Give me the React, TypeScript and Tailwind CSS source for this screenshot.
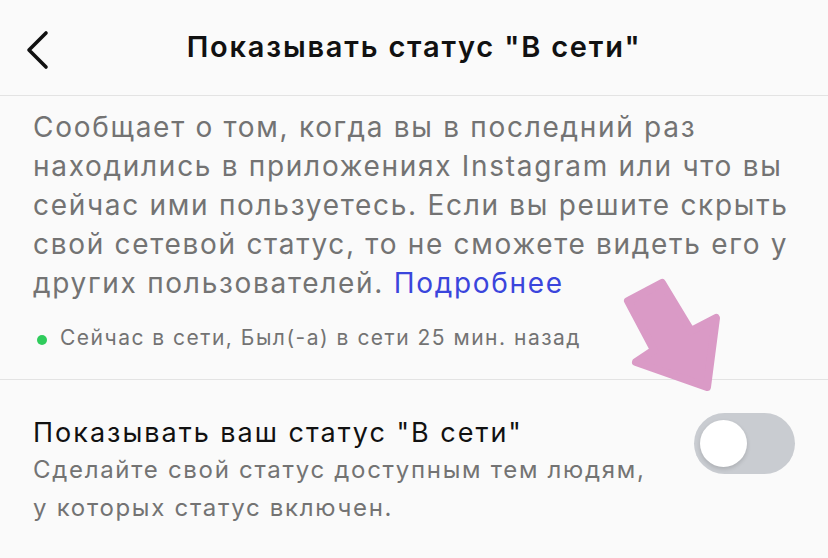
import React from 'react';

const BackIcon = () => (
  <svg width="28" height="40" viewBox="0 0 28 40" fill="none" aria-hidden>
    <path d="M21 3 L4 20 L21 37" stroke="#111" strokeWidth="3.6" strokeLinecap="round" strokeLinejoin="round" />
  </svg>
);

const Toggle = () => (
  <div className="relative w-[101px] h-[61px] rounded-full bg-[#c9ccd1] shrink-0">
    <div className="absolute left-[6px] top-[7px] w-[47px] h-[47px] rounded-full bg-white shadow-[0_2px_4px_rgba(0,0,0,0.15)]" />
  </div>
);

// pink annotation arrow drawn over the screenshot
const Arrow = () => (
  <svg className="absolute left-0 top-0 pointer-events-none" width="828" height="558" viewBox="0 0 828 558" aria-hidden>
    <polygon
      points="628,301 662,283 691,331 716,318 707,387 636,362 654,350"
      fill="#da9ac6"
      stroke="#da9ac6"
      strokeWidth="8"
      strokeLinejoin="round"
    />
  </svg>
);

const paragraph = [
  'Сообщает о том, когда вы в последний раз',
  'находились в приложениях Instagram или что вы',
  'сейчас ими пользуетесь. Если вы решите скрыть',
  'свой сетевой статус, то не сможете видеть его у',
];

export default function App() {
  return (
    <div
      className="relative w-[828px] h-[558px] overflow-hidden bg-[#fafafa] text-[#111]"
      style={{ fontFamily: 'Inter, "Noto Sans", sans-serif' }}
    >
      <header className="relative h-[96px] flex items-center justify-center border-b border-[#e3e3e3]">
        <button className="absolute left-[25px] top-[30px]">
          <BackIcon />
        </button>
        <h1 className="text-[29px] font-semibold tracking-[1.8px] pb-[2px]">Показывать статус "В сети"</h1>
      </header>

      <section className="px-[33px] pt-[12px] pb-[26px] border-b border-[#e3e3e3]">
        <div className="text-[28px] leading-[39px] tracking-[1.7px] text-[#737373] whitespace-nowrap">
          {paragraph.map((line) => (
            <div key={line}>{line}</div>
          ))}
          <div>
            других пользователей. <span className="text-[#3a45dc]">Подробнее</span>
          </div>
        </div>
        <div className="mt-[20px] flex items-center gap-[13px] pl-[4px] text-[21px] leading-[30px] tracking-[1.5px] text-[#737373]">
          <span className="w-[10px] h-[10px] rounded-full bg-[#2fcc5c] mt-[4px]" />
          <span>Сейчас в сети, Был(-а) в сети 25 мин. назад</span>
        </div>
      </section>

      <section className="flex items-start justify-between pl-[33px] pr-[33px] pt-[35px]">
        <div className="whitespace-nowrap">
          <div className="text-[27px] leading-[36px] tracking-[2px]">Показывать ваш статус "В сети"</div>
          <div className="text-[24px] leading-[38px] tracking-[1.7px] text-[#737373]">
            <div>Сделайте свой статус доступным тем людям,</div>
            <div>у которых статус включен.</div>
          </div>
        </div>
        <div className="-mt-[2px]">
          <Toggle />
        </div>
      </section>

      <Arrow />
    </div>
  );
}
